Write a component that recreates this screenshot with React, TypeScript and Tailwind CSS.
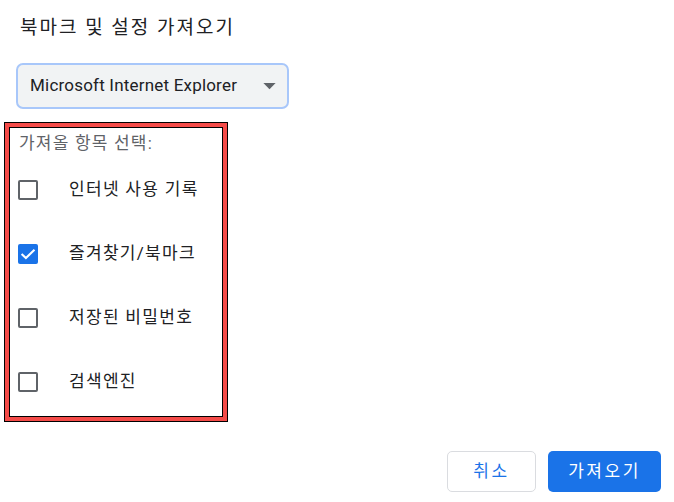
const items = [
  { label: '인터넷 사용 기록', checked: false },
  { label: '즐겨찾기/북마크', checked: true },
  { label: '저장된 비밀번호', checked: false },
  { label: '검색엔진', checked: false },
];

function Checkbox({ checked }: { checked: boolean }) {
  if (checked) {
    return (
      <span className="h-5 w-5 rounded-[2px] bg-[#1a73e8]">
        <svg viewBox="0 0 20 20" className="h-5 w-5" fill="none" stroke="white" strokeWidth="2.1">
          <path d="M3.6 10l4.3 4 8.6-8.2" />
        </svg>
      </span>
    );
  }
  return <span className="h-5 w-5 rounded-[2px] border-2 border-[#5f6368]" />;
}

export default function App() {
  return (
    <div
      className="h-[502px] w-[674px] bg-white pl-4 pt-[14px] text-[#202124]"
      style={{ fontFamily: "Roboto, 'Noto Sans CJK KR', sans-serif" }}
    >
      <h1 className="ml-1 text-[19px] leading-7 tracking-[2px]">북마크 및 설정 가져오기</h1>

      <div className="mt-[21px] flex h-[46px] w-[273px] items-center justify-between rounded-[7px] border-2 border-[#a8c7fa] bg-[#f1f3f4] pl-3 pr-[11px]">
        <span className="text-[17px] tracking-[0.2px]">Microsoft Internet Explorer</span>
        <svg viewBox="0 0 14 8" className="h-[7px] w-[13px]">
          <path d="M0 0h14L7 7z" fill="#5f6368" />
        </svg>
      </div>

      <div className="-ml-3 mt-[13px] w-[224px] border border-black bg-[#f44b48] p-1">
        <div className="border border-black bg-white pb-[2px] pl-[8px] pt-1">
          <p className="ml-px text-[17px] leading-[22px] tracking-[1.2px] text-[#5f6368]">가져올 항목 선택:</p>
          <div className="mt-[4px]">
            {items.map((item) => (
              <div key={item.label} className="flex h-16 items-center gap-[31px]">
                <Checkbox checked={item.checked} />
                <span className="text-[17px] tracking-[1.3px]">{item.label}</span>
              </div>
            ))}
          </div>
        </div>
      </div>

      <div className="mt-[29px] flex justify-end gap-3 pr-[13px]">
        <button className="h-[41px] w-[89px] rounded-[5px] border border-[#dadce0] bg-white text-[17px] tracking-[2.5px] text-[#1a73e8]">
          취소
        </button>
        <button className="h-[41px] w-[113px] rounded-[5px] bg-[#1a73e8] text-[17px] tracking-[2.5px] text-white">
          가져오기
        </button>
      </div>
    </div>
  );
}
